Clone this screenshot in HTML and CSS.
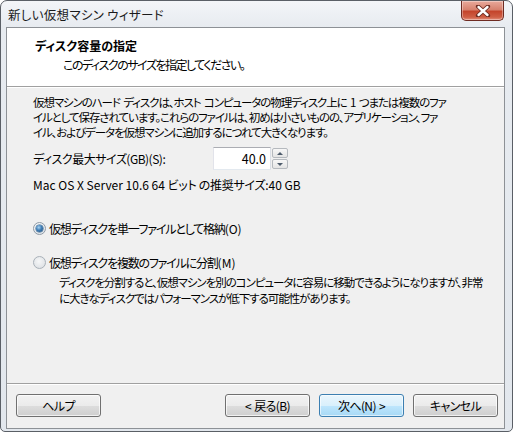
FILE: index.html
```html
<!DOCTYPE html>
<html lang="ja">
<head>
<meta charset="utf-8">
<title>新しい仮想マシン ウィザード</title>
<link rel="stylesheet" href="styles.css">
</head>
<body>
<div class="window">
  <div class="titlebar">
    <span class="title">新しい仮想マシン ウィザード</span>
    <div class="close">
      <svg width="16" height="12" viewBox="0 0 16 12" aria-hidden="true">
        <path d="M3 1.5 L13 10.5 M13 1.5 L3 10.5" stroke="#6b2a20" stroke-width="4.2" stroke-linecap="round" fill="none"/>
        <path d="M3.5 2 L12.5 10 M12.5 2 L3.5 10" stroke="#ffffff" stroke-width="2.4" stroke-linecap="round" fill="none"/>
      </svg>
    </div>
  </div>
  <div class="client">
    <div class="header">
      <div class="h-title">ディスク容量の指定</div>
      <div class="h-sub">このディスクのサイズを指定してください。</div>
    </div>
    <div class="body">
      <p class="intro">仮想マシンのハード ディスクは、ホスト コンピュータの物理ディスク上に 1 つまたは複数のファ<br>イルとして保存されています。これらのファイルは、初めは小さいものの、アプリケーション、ファ<br>イル、およびデータを仮想マシンに追加するにつれて大きくなります。</p>
      <div class="size-row">
        <span class="size-label">ディスク最大サイズ(GB)(S):</span>
        <div class="spin">
          <div class="spin-input">40.0</div>
          <div class="spin-btns">
            <div class="sb"><span class="arrow-up"></span></div>
            <div class="sb"><span class="arrow-down"></span></div>
          </div>
        </div>
      </div>
      <div class="rec">Mac OS X Server 10.6 64 <span class="jp">ビット の推奨サイズ</span>:40 GB</div>
      <div class="radio-row first"><span class="radio on"></span><span class="jp">仮想ディスクを単一ファイルとして格納</span><span>(O)</span></div>
      <div class="radio-row second"><span class="radio"></span><span class="jp">仮想ディスクを複数のファイルに分割</span><span>(M)</span></div>
      <p class="desc">ディスクを分割すると、仮想マシンを別のコンピュータに容易に移動できるようになりますが、非常<br>に大きなディスクではパフォーマンスが低下する可能性があります。</p>
    </div>
    <div class="footer">
      <button class="btn">ヘルプ</button>
      <span class="spacer"></span>
      <button class="btn">&lt; 戻る(B)</button>
      <button class="btn default">次へ(N) &gt;</button>
      <button class="btn">キャンセル</button>
    </div>
  </div>
</div>
</body>
</html>
```

FILE: styles.css
```css
* { box-sizing: border-box; }
html, body {
  margin: 0;
  padding: 0;
  background: #ffffff;
}
body {
  font-family: "Noto Sans CJK JP", "Noto Sans", sans-serif;
  font-size: 12px;
  color: #000;
  font-feature-settings: "palt";
}
.window {
  width: 513px;
  height: 432px;
  border: 1px solid #5a5f66;
  border-radius: 7px 7px 5px 5px;
  background: linear-gradient(#f3f5f8 0px, #e7ebf0 26px, #e2e7ed 100%);
  padding: 0 7px 2px 5px;
  display: flex;
  flex-direction: column;
}
.titlebar {
  height: 26px;
  display: flex;
  align-items: flex-start;
}
.title {
  margin-top: 6px;
  margin-left: 2px;
  font-size: 12.5px;
  line-height: 16px;
  color: #1a1a1a;
  letter-spacing: 0.3px;
}
.close {
  margin-left: auto;
  margin-right: 1px;
  width: 43px;
  height: 20px;
  border: 1px solid #6e2b22;
  border-top: none;
  border-radius: 0 0 5px 5px;
  background: linear-gradient(#e9a99b 0%, #d7826f 45%, #c4452c 55%, #cf5f45 85%, #e39280 100%);
  box-shadow: inset 0 0 0 1px rgba(255,255,255,0.35);
  display: flex;
  align-items: center;
  justify-content: center;
}
.client {
  flex: 1;
  border: 1px solid #8d9196;
  background: #f0f0f0;
  display: flex;
  flex-direction: column;
}
.header {
  height: 59px;
  background: #ffffff;
  border-bottom: 1px solid #a0a0a0;
  padding: 10px 0 0 28px;
}
.h-title {
  font-weight: bold;
  line-height: 15px;
}
.h-sub {
  line-height: 15px;
  margin-top: 4px;
  padding-left: 28px;
  letter-spacing: -1.5px;
}
.body {
  flex: 1;
  border-top: 1px solid #ffffff;
  padding: 7px 0 0 26px;
}
.intro {
  margin: 0;
  font-size: 11.5px;
  line-height: 15px;
  white-space: nowrap;
  letter-spacing: -1.1px;
  word-spacing: 2px;
}
.size-row {
  display: flex;
  align-items: center;
  margin-top: 7px;
  height: 23px;
}
.size-label {
  width: 180px;
  letter-spacing: -0.5px;
}
.spin {
  display: flex;
  height: 23px;
}
.spin-input {
  width: 58px;
  height: 23px;
  background: #fff;
  border: 1px solid #abadb3;
  border-left-color: #e2e3ea;
  border-bottom-color: #e3e9ef;
  border-right-color: #dbdfe6;
  text-align: right;
  padding-right: 4px;
  line-height: 21px;
  font-size: 12.5px;
}
.spin-btns {
  display: flex;
  flex-direction: column;
  gap: 1px;
  padding: 1px 0 1px 1px;
}
.sb {
  width: 16px;
  flex: 1;
  border: 1px solid #b5b9be;
  border-radius: 2px;
  background: linear-gradient(#f7f7f7, #e4e4e4);
  display: flex;
  align-items: center;
  justify-content: center;
}
.arrow-up {
  width: 0;
  height: 0;
  border-left: 3px solid transparent;
  border-right: 3px solid transparent;
  border-bottom: 3px solid #4d5b6b;
}
.arrow-down {
  width: 0;
  height: 0;
  border-left: 3px solid transparent;
  border-right: 3px solid transparent;
  border-top: 3px solid #4d5b6b;
}
.rec {
  margin-top: 7px;
  line-height: 15px;
  white-space: nowrap;
}
.rec .jp { letter-spacing: -0.3px; }
.radio-row {
  display: flex;
  align-items: center;
  line-height: 15px;
  white-space: nowrap;
}
.radio-row .jp { letter-spacing: -1.2px; }
.radio-row.first { margin-top: 29px; }
.radio-row.second { margin-top: 19px; }
.radio {
  width: 13px;
  height: 13px;
  border-radius: 50%;
  border: 1px solid #8e9aa6;
  background: radial-gradient(circle at 40% 35%, #ffffff 0%, #e9ecef 60%, #d3d8dd 100%);
  margin-right: 3px;
  display: flex;
  align-items: center;
  justify-content: center;
}
.radio.on::after {
  content: "";
  width: 7px;
  height: 7px;
  border-radius: 50%;
  background: radial-gradient(circle at 40% 35%, #a8d3f2 0%, #3f7db5 45%, #1f4d78 100%);
  box-shadow: 0 0 0 0.5px #2a5b87;
}
.radio:not(.on) {
  border-color: #a9b1b9;
  background: radial-gradient(circle at 45% 40%, #f6f7f8 0%, #e1e4e7 70%, #cfd4d9 100%);
}
.desc {
  margin: 4px 0 0 26px;
  font-size: 11.5px;
  line-height: 16px;
  white-space: nowrap;
  letter-spacing: -1.05px;
}
.footer {
  height: 45px;
  border-top: 1px solid #a0a0a0;
  box-shadow: inset 0 1px 0 #ffffff;
  display: flex;
  align-items: flex-start;
  padding: 10px 6px 0 9px;
}
.spacer { flex: 1; }
.btn {
  width: 85px;
  height: 23px;
  margin: 0 0 0 9px;
  font-family: inherit;
  font-size: 12px;
  font-feature-settings: "palt";
  letter-spacing: -0.6px;
  word-spacing: 1px;
  color: #000;
  border: 1px solid #707070;
  border-radius: 3px;
  background: linear-gradient(#f2f2f2 0%, #ebebeb 50%, #dddddd 51%, #cfcfcf 100%);
  box-shadow: inset 0 0 0 1px rgba(255,255,255,0.7);
  padding: 0;
  line-height: 20px;
}
.footer .btn:first-child { margin-left: 0; }
.btn.default {
  border-color: #3c7fb1;
  background: linear-gradient(#eaf6fd 0%, #d9f0fc 50%, #bee6fd 51%, #a7d9f5 100%);
  box-shadow: inset 0 0 0 1px rgba(255,255,255,0.6);
}
```
